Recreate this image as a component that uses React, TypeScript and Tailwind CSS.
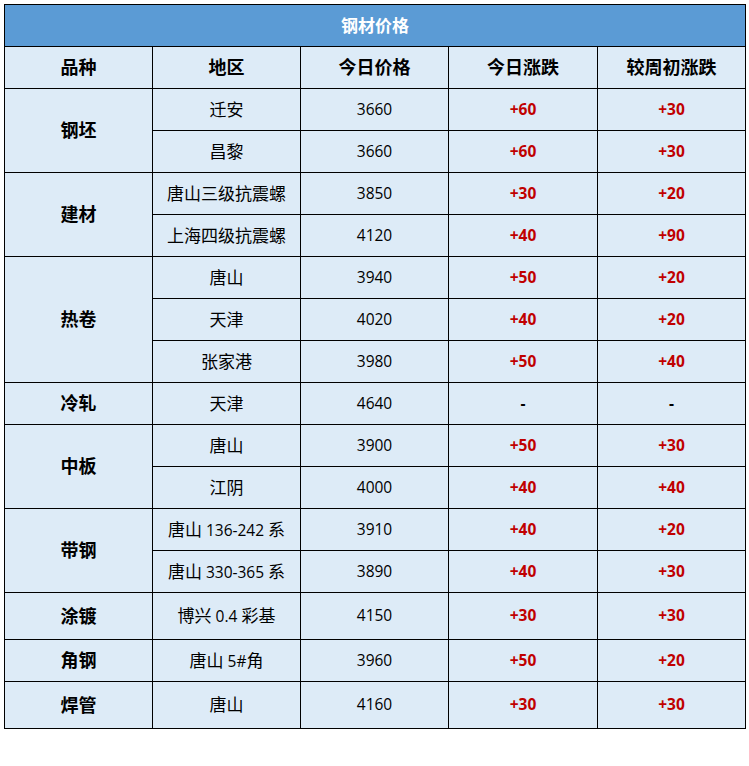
import React from 'react';

type Row = { region: string; price: string; today: string; week: string };
type Group = { name: string; rows: Row[]; heights?: number[] };

const GROUPS: Group[] = [
  {
    name: '钢坯',
    rows: [
      { region: '迁安', price: '3660', today: '+60', week: '+30' },
      { region: '昌黎', price: '3660', today: '+60', week: '+30' },
    ],
  },
  {
    name: '建材',
    rows: [
      { region: '唐山三级抗震螺', price: '3850', today: '+30', week: '+20' },
      { region: '上海四级抗震螺', price: '4120', today: '+40', week: '+90' },
    ],
  },
  {
    name: '热卷',
    rows: [
      { region: '唐山', price: '3940', today: '+50', week: '+20' },
      { region: '天津', price: '4020', today: '+40', week: '+20' },
      { region: '张家港', price: '3980', today: '+50', week: '+40' },
    ],
  },
  {
    name: '冷轧',
    rows: [{ region: '天津', price: '4640', today: '-', week: '-' }],
  },
  {
    name: '中板',
    rows: [
      { region: '唐山', price: '3900', today: '+50', week: '+30' },
      { region: '江阴', price: '4000', today: '+40', week: '+40' },
    ],
  },
  {
    name: '带钢',
    rows: [
      { region: '唐山 136-242 系', price: '3910', today: '+40', week: '+20' },
      { region: '唐山 330-365 系', price: '3890', today: '+40', week: '+30' },
    ],
  },
  {
    name: '涂镀',
    rows: [{ region: '博兴 0.4 彩基', price: '4150', today: '+30', week: '+30' }],
    heights: [47],
  },
  {
    name: '角钢',
    rows: [{ region: '唐山 5#角', price: '3960', today: '+50', week: '+20' }],
  },
  {
    name: '焊管',
    rows: [{ region: '唐山', price: '4160', today: '+30', week: '+30' }],
    heights: [47],
  },
];

// CJK runs a little larger than the digits, like the source sheet
function Mixed({ text }: { text: string }) {
  const parts = text.split(/([\u4e00-\u9fff]+)/).filter((p) => p !== '');
  return (
    <>
      {parts.map((p, i) =>
        /[\u4e00-\u9fff]/.test(p) ? (
          <span key={i} className="text-[17px]">
            {p}
          </span>
        ) : (
          <span key={i}>{p}</span>
        )
      )}
    </>
  );
}

function Change({ value }: { value: string }) {
  if (value === '-') return <span className="font-bold text-black">-</span>;
  return <span className="font-bold text-[#c00000]">{value}</span>;
}

const cell = 'border border-black text-center align-middle p-0';

export default function App() {
  return (
    <div
      className="min-h-screen bg-white p-[4px]"
      style={{ fontFamily: '"Open Sans", "Noto Sans CJK SC", sans-serif' }}
    >
      <table className="w-[741px] table-fixed border-collapse bg-[#ddebf7] text-[15.5px] text-black">
        <colgroup>
          <col className="w-[148px]" />
          <col className="w-[148px]" />
          <col className="w-[148px]" />
          <col className="w-[149px]" />
          <col className="w-[148px]" />
        </colgroup>
        <thead>
          <tr className="h-[42px]">
            <th
              colSpan={5}
              className={`${cell} bg-[#5b9bd5] text-[17px] font-semibold text-white`}
            >
              钢材价格
            </th>
          </tr>
          <tr className="h-[42px]">
            <th className={`${cell} text-[18px] font-bold`}>品种</th>
            <th className={`${cell} text-[18px] font-bold`}>地区</th>
            <th className={`${cell} text-[18px] font-bold`}>今日价格</th>
            <th className={`${cell} text-[18px] font-bold`}>今日涨跌</th>
            <th className={`${cell} text-[18px] font-bold`}>较周初涨跌</th>
          </tr>
        </thead>
        <tbody>
          {GROUPS.map((g) =>
            g.rows.map((r, i) => (
              <tr
                key={g.name + i}
                style={{ height: `${g.heights?.[i] ?? 42}px` }}
              >
                {i === 0 && (
                  <td rowSpan={g.rows.length} className={`${cell} text-[18px] font-bold`}>
                    {g.name}
                  </td>
                )}
                <td className={cell}>
                  <Mixed text={r.region} />
                </td>
                <td className={cell}>{r.price}</td>
                <td className={cell}>
                  <Change value={r.today} />
                </td>
                <td className={cell}>
                  <Change value={r.week} />
                </td>
              </tr>
            ))
          )}
        </tbody>
      </table>
    </div>
  );
}
